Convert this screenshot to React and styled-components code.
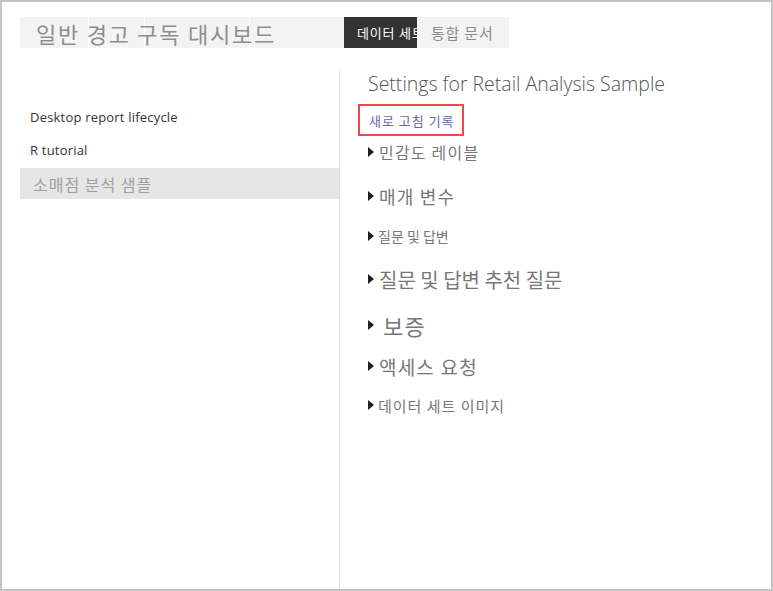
import React from "react";
import styled, { createGlobalStyle } from "styled-components";

const GlobalStyle = createGlobalStyle`
    html, body {
        margin: 0;
        padding: 0;
        background: #ffffff;
    }
    body {
        font-family: "Open Sans", "Noto Sans CJK KR", sans-serif;
    }
`;

const KR = `"Noto Sans CJK KR", "Noto Sans", sans-serif`;

const navItems = [
    { label: "Desktop report lifecycle" },
    { label: "R tutorial" },
    { label: "소매점 분석 샘플", selected: true }
];

// size = font size, top = gap above the row, gap = space after the arrow, ls = letter spacing
const sections = [
    { label: "민감도 레이블", size: 16, top: 1, gap: 5, ls: 1.2 },
    { label: "매개 변수", size: 18, top: 14, gap: 5, ls: 1.2 },
    { label: "질문 및 답변", size: 14, top: 10, gap: 4, ls: 0 },
    { label: "질문 및 답변 추천 질문", size: 20, top: 13, gap: 5, ls: 0 },
    { label: "보증", size: 22, top: 16, gap: 9, ls: 1.2 },
    { label: "액세스 요청", size: 19, top: 11, gap: 5, ls: 1.2 },
    { label: "데이터 세트 이미지", size: 15, top: 9, gap: 4, ls: 1 }
];

const Frame = styled.div`
    width: 773px;
    height: 591px;
    box-sizing: border-box;
    border: 2px solid #c4c4c4;
    padding: 15px 0 0 18px;
    display: flex;
    flex-direction: column;
    overflow: hidden;
`;

const Header = styled.div`
    display: flex;
    height: 31px;
    width: 489px;
`;

const TitleBlock = styled.div`
    width: 324px;
    box-sizing: border-box;
    padding-left: 16px;
    background:
        linear-gradient(#ffffff, #ffffff) 68px 0 / 1px 100% no-repeat,
        linear-gradient(#ffffff, #ffffff) 124px 0 / 1px 100% no-repeat,
        linear-gradient(#ffffff, #ffffff) 229px 0 / 1px 100% no-repeat,
        #f3f3f3;
    font-family: ${KR};
    font-size: 22px;
    line-height: 33px;
    color: #8e8e8e;
    letter-spacing: 1.75px;
    white-space: nowrap;
`;

const Tab = styled.div`
    box-sizing: border-box;
    width: ${(p) => (p.$active ? 73 : 92)}px;
    padding-left: ${(p) => (p.$active ? 13 : 14)}px;
    background: ${(p) => (p.$active ? "#333333" : "#f3f3f3")};
    color: ${(p) => (p.$active ? "#ffffff" : "#8e8e8e")};
    font-family: ${KR};
    font-size: ${(p) => (p.$active ? 13 : 15)}px;
    letter-spacing: 0.8px;
    line-height: 31px;
    white-space: nowrap;
    overflow: hidden;
`;

const Main = styled.div`
    flex: 1;
    display: flex;
    margin-top: 23px;
`;

const Nav = styled.div`
    width: 319px;
    padding-top: 29px;
    display: flex;
    flex-direction: column;
`;

const NavItem = styled.div`
    height: ${(p) => (p.$selected ? 31 : 33)}px;
    margin-top: ${(p) => (p.$selected ? 2 : 0)}px;
    padding-left: ${(p) => (p.$selected ? 13 : 10)}px;
    display: flex;
    align-items: center;
    background: ${(p) => (p.$selected ? "#e6e6e6" : "transparent")};
    color: ${(p) => (p.$selected ? "#a0a0a0" : "#333333")};
    font-family: ${(p) => (p.$selected ? KR : `"Open Sans", sans-serif`)};
    font-size: ${(p) => (p.$selected ? 16 : 13)}px;
    letter-spacing: ${(p) => (p.$selected ? 1 : 0.2)}px;
`;

const Content = styled.div`
    flex: 1;
    border-left: 1px solid #e2e2e2;
    padding-left: 28px;
    display: flex;
    flex-direction: column;
    align-items: flex-start;
`;

const Heading = styled.h1`
    margin: 0;
    font-family: "Open Sans", sans-serif;
    font-weight: 300;
    font-size: 19.5px;
    line-height: 26px;
    color: #555555;
`;

const RefreshLink = styled.a`
    margin: 7px 0 0 -10px;
    height: 32px;
    box-sizing: border-box;
    padding: 0 7px 0 9px;
    border: 2px solid #f2464b;
    display: inline-flex;
    align-items: center;
    font-family: ${KR};
    font-size: 13px;
    color: #6466b0;
    text-decoration: none;
    letter-spacing: 1px;
`;

const Section = styled.div`
    height: 30px;
    margin-top: ${(p) => p.$top}px;
    display: flex;
    align-items: center;
    gap: ${(p) => p.$gap}px;
    font-family: ${KR};
    font-size: ${(p) => p.$size}px;
    letter-spacing: ${(p) => p.$ls}px;
    color: #777777;
`;

const Arrow = styled.span`
    width: 0;
    height: 0;
    border-top: 5px solid transparent;
    border-bottom: 5px solid transparent;
    border-left: 6px solid #1f1f1f;
    flex-shrink: 0;
`;

export default function App() {
    return (
        <>
            <GlobalStyle />
            <Frame>
                <Header>
                    <TitleBlock>일반 경고 구독 대시보드</TitleBlock>
                    <Tab $active>데이터 세트</Tab>
                    <Tab>통합 문서</Tab>
                </Header>
                <Main>
                    <Nav>
                        {navItems.map((item, i) => (
                            <NavItem key={i} $selected={item.selected}>
                                {item.label}
                            </NavItem>
                        ))}
                    </Nav>
                    <Content>
                        <Heading>Settings for Retail Analysis Sample</Heading>
                        <RefreshLink href="#">새로 고침 기록</RefreshLink>
                        {sections.map((s, i) => (
                            <Section
                                key={i}
                                $size={s.size}
                                $top={s.top}
                                $gap={s.gap}
                                $ls={s.ls}>
                                <Arrow />
                                {s.label}
                            </Section>
                        ))}
                    </Content>
                </Main>
            </Frame>
        </>
    );
}
